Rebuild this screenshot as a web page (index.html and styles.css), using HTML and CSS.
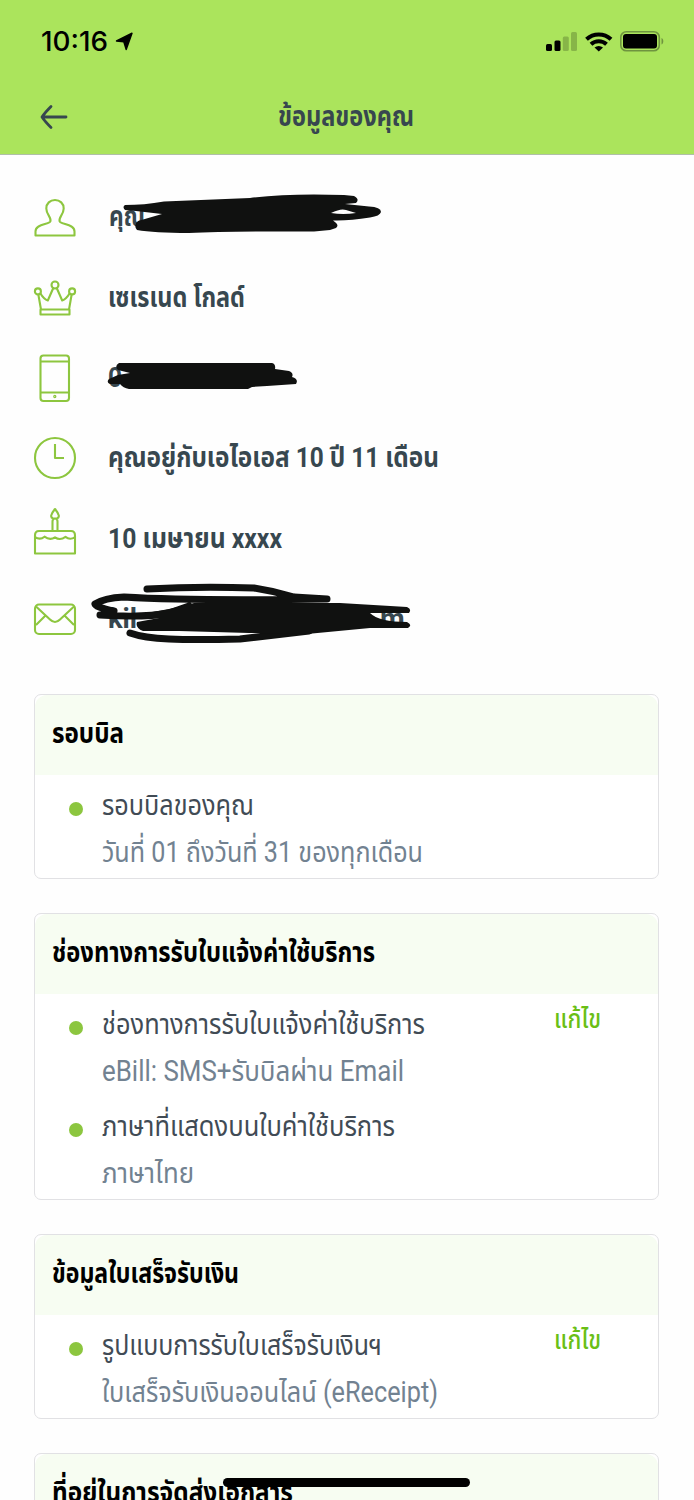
FILE: index.html
```html
<!DOCTYPE html>
<html lang="th">
<head>
<meta charset="utf-8">
<title>ข้อมูลของคุณ</title>
<link rel="stylesheet" href="styles.css">
</head>
<body>
<header class="top">
  <div class="status">
    <svg class="clock-text" width="68" height="30"><text x="0" y="24" textLength="67" lengthAdjust="spacingAndGlyphs">10:16</text></svg>
    <svg class="locator" width="18" height="19" viewBox="0 0 18 19"><path d="M17 1.200 11.200 17.500 8.800 9.800 1.500 9z" stroke="#000" stroke-width="1.400" stroke-linejoin="round"/></svg>
    <svg class="signals" width="120" height="24" viewBox="0 0 120 24">
      <rect x="0" y="14" width="6" height="7" rx="1.500"/><rect x="8.500" y="10.500" width="6" height="10.500" rx="1.500"/>
      <g fill="#87b548"><rect x="16.800" y="6.500" width="6" height="14.500" rx="1.500"/><rect x="25" y="2" width="6" height="19" rx="1.500"/></g>
      <g fill="none" stroke="#000" stroke-width="4"><path d="M40.500 9.300a18 18 0 0 1 24.500 0"/><path d="M45 14.200a11.500 11.500 0 0 1 15.500 0"/></g>
      <path d="M48.500 17.600a6.500 6.500 0 0 1 8.500 0l-4.250 4z"/>
      <rect x="74.800" y="1.800" width="38.500" height="19" rx="5.500" fill="none" stroke="#6f943f" stroke-width="1.600"/>
      <rect x="77" y="4" width="34" height="14.500" rx="3"/><path d="M115.500 8c2.400 1 2.400 5.500 0 6.500z" fill="#6f943f"/>
    </svg>
  </div>
  <div class="bar">
    <svg class="back" width="28" height="26" viewBox="0 0 28 26"><path d="M26 13H3M11 2.500Q5 8.500 2 13q3 4.500 9 10.500"/></svg>
    <svg class="title" width="136" height="40"><text x="-1" y="29" textLength="136" lengthAdjust="spacingAndGlyphs">ข้อมูลของคุณ</text></svg>
  </div>
</header>
<main>
  <ul class="profile">
    <li>
      <svg class="icon" viewBox="0 0 44 50"><path d="M17.300 30.500C19 26.500 13.300 24 13.300 17.500c0-5 3.700-8.500 8.700-8.500s8.700 3.500 8.700 8.500c0 6.500-5.700 9-4 13 1.800 3.200 14.800 2.500 14.800 10v4H2.500v-4c0-7.500 13-6.800 14.800-10z"/></svg>
      <svg class="label" width="280" height="50" viewBox="0 -5 280 50"><text x="0" y="29.500" textLength="36" lengthAdjust="spacingAndGlyphs">คุณ</text>
        <path class="blot" fill-rule="evenodd" d="M16 9Q35 9 55 5.500L141 2Q180-3 235-1L245 0Q251 3 247 7L236 8 260 10.500Q272 11 272 16 271 20 261 21.500 240 25 224 24.500 231 29 227 32L221 34 205 35.500Q120 35 80 37 45 37 28 34 24 29 29 25L53 18 27 15 16 14Q13 11 16 9zM222 17Q232 12 237 14L247 17Q234 19 222 17z"/></svg>
    </li>
    <li>
      <svg class="icon" viewBox="0 0 44 50"><path d="M8 37.500 5.300 22.300M36 37.500 38.700 22.300M7.300 21.300Q11 27.500 14.800 28.500L20.300 16M36.700 21.300Q33 27.500 29.200 28.500L23.700 16M7.500 37.500h29V42.500h-29z"/><circle cx="22" cy="13" r="3.500"/><circle cx="4.900" cy="19.400" r="3"/><circle cx="39.100" cy="19.400" r="3"/></svg>
      <svg class="label" width="280" height="50" viewBox="0 -5 280 50"><text x="-1" y="29.500" textLength="137" lengthAdjust="spacingAndGlyphs">เซเรเนด โกลด์</text></svg>
    </li>
    <li>
      <svg class="icon" viewBox="0 0 44 50"><rect x="7.500" y="3.500" width="28.500" height="45.500" rx="3"/><path d="M7.500 9.500H36M7.500 40.500H36"/><circle cx="21.800" cy="44.500" r=".6"/></svg>
      <svg class="label" width="280" height="50" viewBox="0 -5 280 50"><text x="-1" y="30" textLength="14" lengthAdjust="spacingAndGlyphs">0</text>
        <path class="blot" d="M10 6H163Q167 7 166 12L180 14Q185 16 183 20 190 22 187 27L158 29 143 30 139 32H20Q14 31 11 27H1Q-3 25 0 22L9 18 21 16 9 13Q5 9 10 6z"/></svg>
    </li>
    <li>
      <svg class="icon" viewBox="0 0 44 50"><circle cx="22" cy="26" r="20"/><path d="M22 12v14h9"/></svg>
      <svg class="label" width="340" height="50" viewBox="0 -5 340 50"><text x="-1" y="29.500" textLength="331" lengthAdjust="spacingAndGlyphs">คุณอยู่กับเอไอเอส 10 ปี 11 เดือน</text></svg>
    </li>
    <li>
      <svg class="icon" viewBox="0 0 44 50"><path d="M2 40.500V22.500q0-4.500 4-4.500h32q4 0 4 4.500v18zM19.500 18V8.500q0-3 2.500-3t2.500 3V18M22-4Q15.500 4 20 5.500h4Q28.500 4 22-4zM2 24q5 3.500 9.500-.3 5.500 4 10.500.6 5 3.500 10.500-.4 4.500 3.600 9.500.1"/></svg>
      <svg class="label" width="280" height="50" viewBox="0 -5 280 50"><text x="-1" y="29.500" textLength="174" lengthAdjust="spacingAndGlyphs">10 เมษายน xxxx</text></svg>
    </li>
    <li>
      <svg class="icon" viewBox="0 0 44 50"><rect x="2" y="11.500" width="40" height="29.500" rx="4"/><path d="M3 13.500 17 26.500q5 5 10 0L41 13.500M3 32l9-9M41 32l-9-9"/></svg>
      <svg class="label" width="330" height="60" viewBox="0 -10 330 60"><text x="-1" y="30" textLength="29" lengthAdjust="spacingAndGlyphs">kil</text><text x="271" y="30">m</text>
        <path class="ink" d="M38-9Q90-12 145-10 165-7 185-1L218 1M-14 6Q-5 0 15-1 80 3 218 1M-14 6Q-14 9 5 13M-9 17Q35 20 60 15L80 8M21 35Q35 40 60 41T131 41L200 33"/>
        <path class="blot" d="M30 16Q60 12 85 5L231 5 298 9Q303 11 300 15L261 15Q270 24 298 24 304 27 299 30L261 30 198 36 140 35 70 33H34Q26 30 28 24L50 20 30 21z"/></svg>
    </li>
  </ul>

  <section class="card">
    <h2><svg width="330" height="40"><text x="0" y="29" textLength="72" lengthAdjust="spacingAndGlyphs">รอบบิล</text></svg></h2>
    <div class="item"><i></i><div class="lines">
      <svg class="name"><text x="0" y="40" textLength="152" lengthAdjust="spacingAndGlyphs">รอบบิลของคุณ</text></svg>
      <svg class="value"><text x="0" y="40" textLength="321" lengthAdjust="spacingAndGlyphs">วันที่ 01 ถึงวันที่ 31 ของทุกเดือน</text></svg>
    </div></div>
  </section>

  <section class="card">
    <h2><svg width="330" height="40"><text x="0" y="29" textLength="323" lengthAdjust="spacingAndGlyphs">ช่องทางการรับใบแจ้งค่าใช้บริการ</text></svg></h2>
    <div class="item"><i></i><div class="lines">
      <svg class="name"><text x="0" y="40" textLength="323" lengthAdjust="spacingAndGlyphs">ช่องทางการรับใบแจ้งค่าใช้บริการ</text></svg>
      <svg class="value"><text x="0" y="40" textLength="302" lengthAdjust="spacingAndGlyphs">eBill: SMS+รับบิลผ่าน Email</text></svg>
    </div><svg class="edit"><text x="0" y="34" textLength="47" lengthAdjust="spacingAndGlyphs">แก้ไข</text></svg></div>
    <div class="item"><i></i><div class="lines">
      <svg class="name"><text x="0" y="40" textLength="293" lengthAdjust="spacingAndGlyphs">ภาษาที่แสดงบนใบค่าใช้บริการ</text></svg>
      <svg class="value"><text x="0" y="40" textLength="92" lengthAdjust="spacingAndGlyphs">ภาษาไทย</text></svg>
    </div></div>
  </section>

  <section class="card">
    <h2><svg width="330" height="40"><text x="0" y="29" textLength="187" lengthAdjust="spacingAndGlyphs">ข้อมูลใบเสร็จรับเงิน</text></svg></h2>
    <div class="item"><i></i><div class="lines">
      <svg class="name"><text x="0" y="40" textLength="280" lengthAdjust="spacingAndGlyphs">รูปแบบการรับใบเสร็จรับเงินฯ</text></svg>
      <svg class="value"><text x="0" y="40" textLength="336" lengthAdjust="spacingAndGlyphs">ใบเสร็จรับเงินออนไลน์ (eReceipt)</text></svg>
    </div><svg class="edit"><text x="0" y="34" textLength="47" lengthAdjust="spacingAndGlyphs">แก้ไข</text></svg></div>
  </section>

  <section class="card">
    <h2><svg width="330" height="40"><text x="0" y="29" textLength="241" lengthAdjust="spacingAndGlyphs">ที่อยู่ในการจัดส่งเอกสาร</text></svg></h2>
  </section>
</main>
<div class="home"></div>
</body>
</html>
```
FILE: styles.css
```css
* { box-sizing: border-box; }
html, body { height: 1500px; overflow: hidden; }
body {
  margin: 0;
  background: #fefefe;
  font-family: Roboto, "Noto Sans Thai", sans-serif;
  font-size: 29px;
}
main { height: 1345px; overflow: hidden; }
svg { display: block; overflow: visible; flex: none; }
h2, ul { margin: 0; padding: 0; font-size: inherit; }

.top { height: 155px; background: #abe45c; border-bottom: 1px solid #b0bfa8; }
.status { display: flex; align-items: flex-start; height: 97px; padding: 27px 28px 0 41px; }
.clock-text { font-family: Inter, sans-serif; font-size: 27px; font-weight: 500; }
.locator { margin: 5px 0 0 6px; }
.signals { margin: 3px 0 0 auto; }
.bar { display: grid; grid-template-columns: 239px auto; align-items: center; padding-left: 40px; }
.back { fill: none; stroke: #37474f; stroke-width: 2.8; stroke-linecap: round; stroke-linejoin: round; }
.title { font-weight: 700; fill: #37474f; }

.profile { list-style: none; padding-top: 21px; height: 539px; }
.profile li { display: flex; align-items: center; height: 80.4px; padding-left: 32.500px; }
.icon { width: 44px; height: 50px; margin-right: 32px; fill: none; stroke: #8dc63f; stroke-width: 2.1; stroke-linejoin: round; }
.label { font-size: 28.500px; font-weight: 700; fill: #37474f; }
.ink { fill: none; stroke: #101110; stroke-width: 7; stroke-linecap: round; stroke-linejoin: round; }
.blot { fill: #101110; }

.card { width: 625px; margin: 0 0 34px 34px; border: 1px solid #e1e1e4; border-radius: 7px; padding-bottom: 9px; background: #fff; }
.card h2 { height: 80px; padding: 19px 0 0 17px; background: #f7fdf2; border-radius: 12px 12px 0 0; font-weight: 700; }
.item { display: flex; padding-left: 33.500px; }
.item + .item { margin-top: 8px; }
.item i { width: 14px; height: 14px; margin: 27px 19px 0 0; border-radius: 50%; background: #8cc63f; }
.lines { width: 452.500px; }
.lines svg { width: 340px; height: 47px; }
.name { fill: #414b55; }
.value { fill: #728291; }
.edit { width: 47px; height: 40px; fill: #6abf16; font-size: 27px; font-weight: 500; }

.home { position: absolute; left: 223px; top: 1478px; width: 247px; height: 9px; border-radius: 5px; background: #000; }
```
